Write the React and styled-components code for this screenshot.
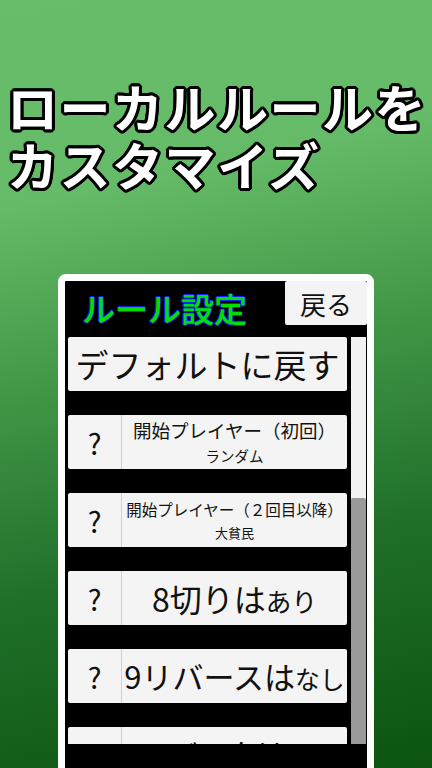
import React from 'react';
import styled, { createGlobalStyle } from 'styled-components';

const GlobalStyle = createGlobalStyle`
  html, body {
    margin: 0;
    padding: 0;
  }
  body {
    font-family: "Noto Sans CJK JP", "Noto Sans", sans-serif;
  }
`;

const Page = styled.div`
  width: 432px;
  height: 768px;
  overflow: hidden;
  background: linear-gradient(
    168deg,
    #68bd6a 0%,
    #66bb68 24%,
    #3f9444 48%,
    #20702a 70%,
    #0c5410 100%
  );
  display: flex;
  flex-direction: column;
`;

const Headline = styled.h1`
  margin: 77px 0 0 0;
  padding-left: 7px;
  font-size: 51px;
  line-height: 58px;
  font-weight: 700;
  color: #ffffff;
  letter-spacing: 1.5px;
  white-space: nowrap;
  text-shadow:
    3px 0 0 #000, -3px 0 0 #000, 0 3px 0 #000, 0 -3px 0 #000,
    2px 2px 0 #000, -2px 2px 0 #000, 2px -2px 0 #000, -2px -2px 0 #000,
    3px 1px 0 #000, -3px 1px 0 #000, 3px -1px 0 #000, -3px -1px 0 #000,
    1px 3px 0 #000, -1px 3px 0 #000, 1px -3px 0 #000, -1px -3px 0 #000;
`;

const Panel = styled.section`
  margin: 81px 0 0 58px;
  width: 302px;
  flex-shrink: 0;
  background: #000;
  border: 7px solid #fff;
  border-radius: 8px;
  padding-bottom: 40px;
`;

const Header = styled.header`
  display: flex;
  justify-content: space-between;
  align-items: flex-start;
  height: 56px;
`;

const PanelTitle = styled.h2`
  margin: -2px 0 0 0;
  padding-left: 17px;
  align-self: center;
  font-size: 33px;
  line-height: 1;
  font-weight: 500;
  color: #00e000;
  text-shadow:
    1px 0 0 #1020ff, -1px 0 0 #1020ff, 0 1px 0 #1020ff, 0 -1px 0 #1020ff;
`;

const Button = styled.button`
  border: none;
  margin: 0;
  padding: 0;
  background: #f4f4f4;
  color: #111;
  font-family: inherit;
  border-radius: 2px;
  display: flex;
  align-items: center;
  justify-content: center;
  white-space: nowrap;
`;

const BackButton = styled(Button)`
  width: 82px;
  height: 44px;
  font-size: 26px;
`;

const Body = styled.div`
  display: flex;
  height: 407px;
  overflow: hidden;
  padding-left: 3px;
  gap: 4px;
`;

const List = styled.div`
  width: 279px;
  display: flex;
  flex-direction: column;
  gap: 24px;
  flex-shrink: 0;
`;

const DefaultButton = styled(Button)`
  height: 54px;
  flex-shrink: 0;
  font-size: 33px;
`;

const Row = styled.div`
  display: flex;
  height: 54px;
  flex-shrink: 0;
`;

const HelpButton = styled(Button)`
  width: 54px;
  height: 100%;
  border-right: 1px solid #cfcfcf;
  border-radius: 2px 0 0 2px;
  font-size: 29px;
`;

const ValueButton = styled(Button)`
  flex: 1;
  height: 100%;
  border-radius: 0 2px 2px 0;
  flex-direction: column;
  font-size: ${(p) => p.$size}px;
  line-height: 1.15;
`;

const Label = styled.span`
  font-size: ${(p) => p.$size}px;
  line-height: 1.2;
`;

const Sub = styled.span`
  font-size: ${(p) => p.$size}px;
  line-height: 1.2;
  margin-top: 6px;
`;

const Small = styled.span`
  font-size: 0.8em;
`;

const Scrollbar = styled.div`
  width: 15px;
  background: #f2f2f2;
  display: flex;
  flex-direction: column;
  justify-content: flex-end;
`;

const Thumb = styled.div`
  height: 246px;
  background: #9a9a9a;
  border-radius: 2px 2px 0 0;
`;

const rules = [
  { title: '開始プレイヤー（初回）', value: 'ランダム', t: 18.5, v: 14.5 },
  { title: '開始プレイヤー（２回目以降）', value: '大貧民', t: 15.5, v: 13 },
  { main: '8切りは', tail: 'あり', size: 32 },
  { main: '9リバースは', tail: 'なし', size: 31 },
  { main: '11バックは', tail: 'なし', size: 29 },
];

const RuleRow = ({ rule }) => (
  <Row>
    <HelpButton>?</HelpButton>
    {rule.title ? (
      <ValueButton>
        <Label $size={rule.t}>{rule.title}</Label>
        <Sub $size={rule.v}>{rule.value}</Sub>
      </ValueButton>
    ) : (
      <ValueButton $size={rule.size}>
        <span>
          {rule.main}
          <Small>{rule.tail}</Small>
        </span>
      </ValueButton>
    )}
  </Row>
);

const App = () => (
  <Page>
    <GlobalStyle />
    <Headline>
      ローカルルールを
      <br />
      カスタマイズ
    </Headline>
    <Panel>
      <Header>
        <PanelTitle>ルール設定</PanelTitle>
        <BackButton>戻る</BackButton>
      </Header>
      <Body>
        <List>
          <DefaultButton>デフォルトに戻す</DefaultButton>
          {rules.map((rule) => (
            <RuleRow key={rule.title || rule.main} rule={rule} />
          ))}
        </List>
        <Scrollbar>
          <Thumb />
        </Scrollbar>
      </Body>
    </Panel>
  </Page>
);

export default App;
